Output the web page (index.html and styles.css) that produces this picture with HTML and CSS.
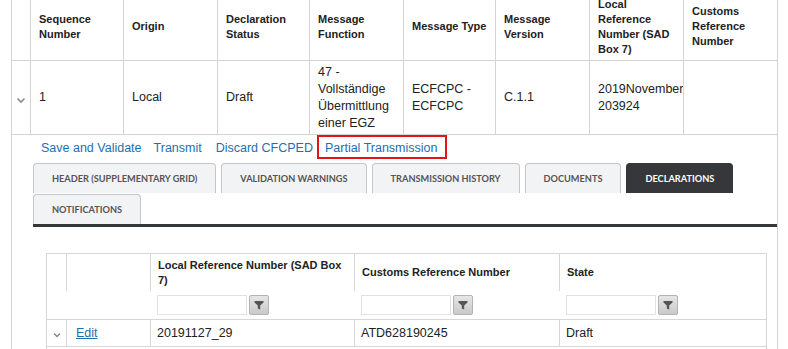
FILE: index.html
```html
<!DOCTYPE html>
<html lang="en">
<head>
  <meta charset="UTF-8" />
  <title>Declarations</title>
  <link rel="stylesheet" href="styles.css">
</head>
<body>

<table class="master">
  <colgroup>
    <col style="width: 19px"><col style="width: 93px"><col style="width: 94px">
    <col style="width: 92px"><col style="width: 94px"><col style="width: 92px">
    <col style="width: 94px"><col style="width: 94px"><col style="width: 94px">
  </colgroup>
  <thead>
    <tr>
      <th></th>
      <th>Sequence Number</th>
      <th>Origin</th>
      <th>Declaration Status</th>
      <th>Message Function</th>
      <th>Message Type</th>
      <th>Message Version</th>
      <th>Local Reference Number (SAD Box 7)</th>
      <th>Customs Reference Number</th>
    </tr>
  </thead>
  <tbody>
    <tr class="row">
      <td class="exp">
        <svg width="10" height="8" viewBox="0 0 10 8"><polyline points="1.5,2.5 5,6 8.5,2.5" fill="none" stroke="#8a8a8a" stroke-width="1.6"/></svg>
      </td>
      <td>1</td>
      <td>Local</td>
      <td>Draft</td>
      <td>47 - Vollständige Übermittlung einer EGZ</td>
      <td>ECFCPC - ECFCPC</td>
      <td>C.1.1</td>
      <td class="clip">2019November_<br>203924</td>
      <td></td>
    </tr>
    <tr class="detail">
      <td colspan="9">
        <div class="actions">
          <a href="#">Save and Validate</a>
          <a href="#">Transmit</a>
          <a href="#">Discard CFCPED</a>
          <a href="#" class="framed">Partial Transmission</a>
        </div>

        <div class="tabs">
          <div class="tab">Header (Supplementary Grid)</div>
          <div class="tab">Validation Warnings</div>
          <div class="tab">Transmission History</div>
          <div class="tab">Documents</div>
          <div class="tab active">Declarations</div>
          <div class="tab">Notifications</div>
        </div>

        <div class="tab-body">
          <table class="grid">
            <colgroup>
              <col style="width: 20px"><col style="width: 84px"><col style="width: 204px">
              <col style="width: 205px"><col style="width: 207px">
            </colgroup>
            <thead>
              <tr class="titles">
                <th></th>
                <th></th>
                <th>Local Reference Number (SAD Box 7)</th>
                <th>Customs Reference Number</th>
                <th>State</th>
              </tr>
              <tr class="filters">
                <th></th>
                <th></th>
                <th><div class="filter"><input type="text"><button><svg width="12" height="12" viewBox="0 0 12 12"><path d="M1.5 2h9v1.4L7.2 6.6v4L4.8 9.4V6.6L1.5 3.4z" fill="#555"/></svg></button></div></th>
                <th><div class="filter"><input type="text"><button><svg width="12" height="12" viewBox="0 0 12 12"><path d="M1.5 2h9v1.4L7.2 6.6v4L4.8 9.4V6.6L1.5 3.4z" fill="#555"/></svg></button></div></th>
                <th><div class="filter"><input type="text"><button><svg width="12" height="12" viewBox="0 0 12 12"><path d="M1.5 2h9v1.4L7.2 6.6v4L4.8 9.4V6.6L1.5 3.4z" fill="#555"/></svg></button></div></th>
              </tr>
            </thead>
            <tbody>
              <tr>
                <td class="exp">
                  <svg width="10" height="8" viewBox="0 0 10 8"><polyline points="2,2.5 5,5.5 8,2.5" fill="none" stroke="#8a8a8a" stroke-width="1.5"/></svg>
                </td>
                <td><a href="#" class="edit">Edit</a></td>
                <td>20191127_29</td>
                <td>ATD628190245</td>
                <td>Draft</td>
              </tr>
              <tr class="empty"><td colspan="5"></td></tr>
            </tbody>
          </table>
        </div>
      </td>
    </tr>
  </tbody>
</table>

</body>
</html>
```

FILE: styles.css
```css
html, body {
  margin: 0;
  padding: 0;
  background-color: white;
  font-family: 'Liberation Sans', Arial, sans-serif;
  color: #222;
  overflow: hidden;
}

table {
  border-collapse: collapse;
  table-layout: fixed;
}

.master {
  width: 767px;
  margin: -8px 0 0 11px;
}

.master th,
.master td {
  border: 1px solid #d4d4d4;
}

.master th {
  height: 67px;
  padding: 0 8px;
  font-size: 11px;
  font-weight: bold;
  line-height: 15px;
  text-align: left;
  vertical-align: middle;
}

.row td {
  height: 68px;
  padding: 2px 8px;
  font-size: 12.5px;
  line-height: 17px;
  vertical-align: middle;
}

.row td.exp {
  padding: 5px 0 0 4px;
}

.row td.clip {
  overflow: hidden;
  white-space: nowrap;
}

.detail > td {
  padding: 0 0 0 21px;
  vertical-align: top;
}

.actions {
  display: flex;
  align-items: center;
  gap: 12px;
  height: 24px;
  padding-left: 8px;
  font-size: 12.5px;
}

.actions a {
  color: #1f6eb0;
  text-decoration: none;
  padding-top: 2px;
}

.actions a:nth-child(3) {
  margin-left: 2px;
}

.actions a.framed {
  height: 24px;
  box-sizing: border-box;
  line-height: 20px;
  margin-left: -8px;
  padding: 1px 7px 0 6px;
  border: 2px solid #e3131b;
}

.tabs {
  display: flex;
  flex-wrap: wrap;
  gap: 1px 5px;
  margin-top: 4px;
}

.tab {
  height: 30px;
  line-height: 30px;
  padding: 0 18px;
  box-sizing: border-box;
  border: 1px solid #c6c6c6;
  border-bottom: none;
  border-radius: 4px 4px 0 0;
  background-color: #f2f3f5;
  color: #555;
  font-family: Lato, sans-serif;
  font-size: 9.2px;
  font-weight: bold;
  text-transform: uppercase;
}

.tab.active {
  background-color: #36373b;
  border-color: #36373b;
  color: white;
}

.tab-body {
  border-top: 3px solid #36373b;
  padding: 26px 11px 0 13px;
}

.grid {
  width: 721px;
}

.grid th,
.grid td {
  border: 1px solid #d6d6d6;
}

.grid .titles th {
  height: 37px;
  padding: 0 7px;
  border-bottom: none;
  font-size: 11px;
  font-weight: bold;
  line-height: 15px;
  text-align: left;
  vertical-align: middle;
}

.grid .filters th {
  height: 28px;
  padding: 0 6px;
  border-top: none;
  border-left: none;
  border-right: none;
  vertical-align: middle;
}

.grid .filters th:first-child {
  border-left: 1px solid #d6d6d6;
}

.grid .filters th:last-child {
  border-right: 1px solid #d6d6d6;
}

.filter {
  display: flex;
  gap: 2px;
}

.filter input {
  width: 90px;
  height: 20px;
  box-sizing: border-box;
  border: 1px solid #e2e2e2;
  padding: 0;
  margin: 0;
}

.filter button {
  width: 20px;
  height: 20px;
  padding: 0;
  margin: 0;
  border: 1px solid #b4b4b4;
  border-radius: 2px;
  background: linear-gradient(#e6e6e6, #c9c9c9);
  display: flex;
  align-items: center;
  justify-content: center;
}

.grid tbody td {
  height: 22px;
  padding: 0 6px;
  font-size: 12.5px;
  vertical-align: middle;
}

.grid tbody td.exp {
  padding: 4px 0 0 5px;
}

.grid tbody td .edit {
  margin-left: 3px;
  color: #1f6eb0;
}

.grid .empty td {
  height: 20px;
}
```
